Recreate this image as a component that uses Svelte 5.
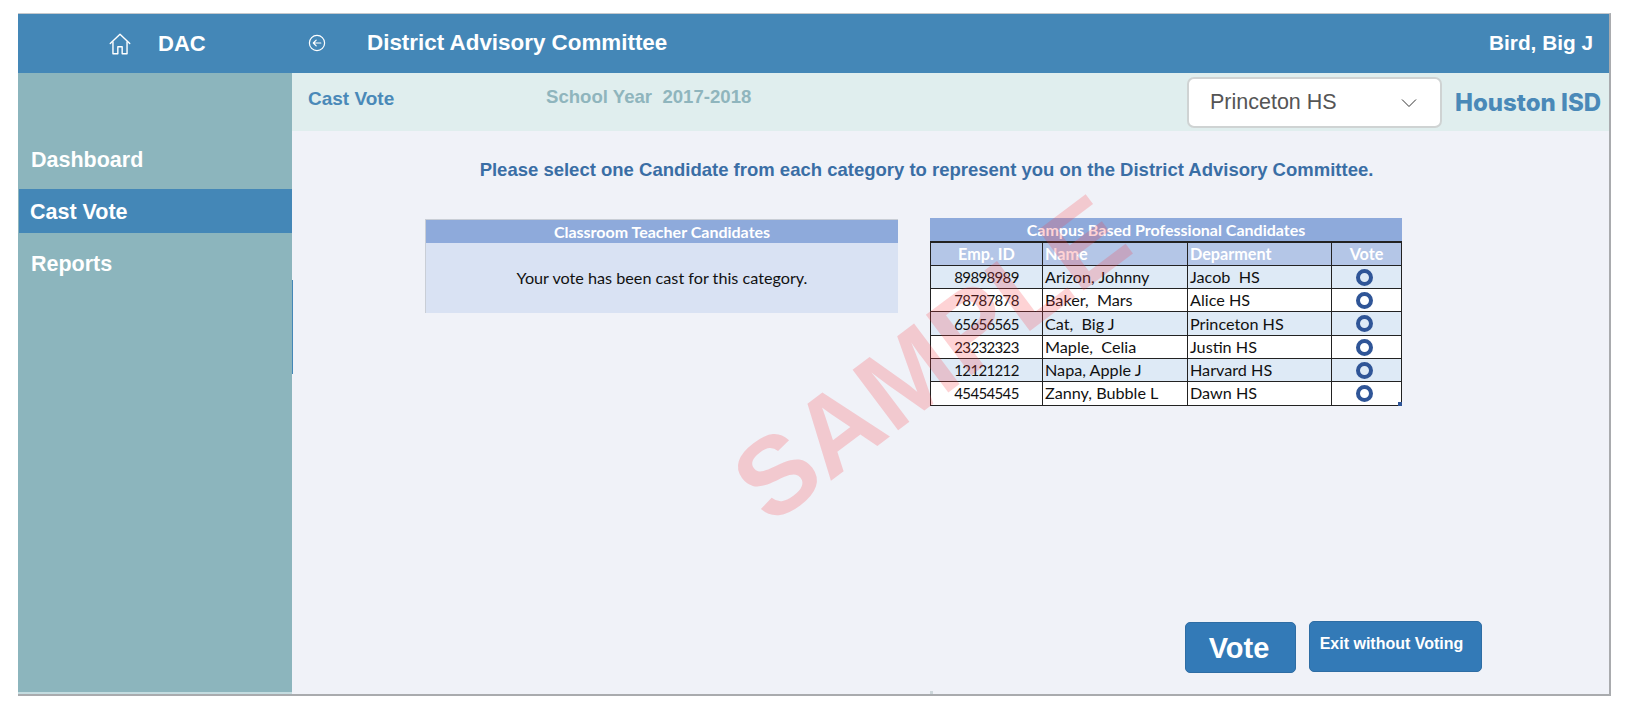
<script>
	const nav = [
		{ label: 'Dashboard', active: false },
		{ label: 'Cast Vote', active: true },
		{ label: 'Reports', active: false }
	];

	const candidates = [
		{ id: '89898989', name: 'Arizon, Johnny', dept: 'Jacob  HS' },
		{ id: '78787878', name: 'Baker,  Mars', dept: 'Alice HS' },
		{ id: '65656565', name: 'Cat,  Big J', dept: 'Princeton HS' },
		{ id: '23232323', name: 'Maple,  Celia', dept: 'Justin HS' },
		{ id: '12121212', name: 'Napa, Apple J', dept: 'Harvard HS' },
		{ id: '45454545', name: 'Zanny, Bubble L', dept: 'Dawn HS' }
	];
</script>

<div class="page">
	<div class="frame">
		<header class="topbar">
			<div class="brand">
				<svg class="home" viewBox="0 0 24 24" width="26" height="26" fill="none" stroke="#fff" stroke-width="1.3" stroke-linejoin="round" stroke-linecap="round">
					<path d="M3 11.5 12 3l9 8.5" />
					<path d="M5.5 10v11h4.5v-6.5h4V21h4.5V10" />
				</svg>
				<span>DAC</span>
			</div>
			<svg class="back" viewBox="0 0 18 18" width="18" height="18" fill="none" stroke="#fff" stroke-width="1.2" stroke-linecap="round" stroke-linejoin="round">
				<circle cx="9" cy="9" r="7.6" />
				<path d="M12.8 9H5.4M8.2 6.1 5.3 9l2.9 2.9" />
			</svg>
			<h1>District Advisory Committee</h1>
			<span class="user">Bird, Big J</span>
		</header>

		<aside class="sidebar">
			{#each nav as item}
				<div class="nav-item" class:active={item.active}>{item.label}</div>
			{/each}
		</aside>

		<div class="subbar">
			<span class="crumb">Cast Vote</span>
			<span class="year">School Year  2017-2018</span>
			<div class="select">
				<span>Princeton HS</span>
				<svg viewBox="0 0 16 10" width="16" height="10" fill="none" stroke="#333" stroke-width="1">
					<path d="M1 1.5 8 8.5l7-7" />
				</svg>
			</div>
			<span class="district">Houston ISD</span>
		</div>

		<main class="content">
			<p class="prompt">Please select one Candidate from each category to represent you on the District Advisory Committee.</p>

			<div class="tables">
				<section class="teacher">
					<div class="title">Classroom Teacher Candidates</div>
					<div class="cast">Your vote has been cast for this category.</div>
				</section>

				<section class="campus">
					<div class="title">Campus Based Professional Candidates</div>
					<table>
						<thead>
							<tr>
								<th class="center">Emp. ID</th>
								<th>Name</th>
								<th>Deparment</th>
								<th class="center">Vote</th>
							</tr>
						</thead>
						<tbody>
							{#each candidates as c}
								<tr>
									<td class="center emp">{c.id}</td>
									<td>{c.name}</td>
									<td>{c.dept}</td>
									<td class="center"><span class="radio"></span></td>
								</tr>
							{/each}
						</tbody>
					</table>
					<span class="handle"></span>
				</section>
			</div>

			<div class="actions">
				<button class="vote">Vote</button>
				<button class="exit">Exit without Voting</button>
			</div>

			<div class="watermark">SAMPLE</div>
			<span class="edge"></span>
			<span class="grip"></span>
		</main>
	</div>
</div>

<style>
	:global(body) {
		background: #fff;
		font-family: 'Liberation Sans', Arial, sans-serif;
	}

	.page {
		padding: 13px 0 0 18px;
		height: 693px;
	}

	.frame {
		width: 1593px;
		height: 683px;
		box-sizing: border-box;
		display: grid;
		grid-template-columns: 274px 1fr;
		grid-template-rows: 59px 58px 1fr;
		border-top: 1px solid #c4c8cc;
		border-right: 2px solid #a9abae;
		border-bottom: 2px solid #a9abae;
	}

	.topbar {
		grid-column: 1 / 3;
		display: flex;
		align-items: center;
		background: #4487b7;
		color: #fff;
		font-weight: 700;
	}

	.brand {
		width: 274px;
		flex: none;
		display: flex;
		align-items: center;
		box-sizing: border-box;
		padding-left: 89px;
		font-size: 22px;
	}

	.home {
		margin-right: 25px;
	}

	.back {
		margin-left: 16px;
		margin-right: 41px;
		margin-top: -2px;
	}

	h1 {
		margin: -2px 0 0;
		font-size: 22.4px;
		font-weight: 700;
	}

	.user {
		margin-left: auto;
		margin-right: 16px;
		font-size: 20.8px;
		margin-top: -2px;
	}

	.sidebar {
		grid-row: 2 / 4;
		box-sizing: border-box;
		background: #8cb5bd;
		border-bottom: 2px solid #c4dce0;
		padding-top: 64px;
		color: #fff;
		font-size: 21.5px;
		font-weight: 700;
	}

	.nav-item {
		height: 44px;
		margin-bottom: 8px;
		padding-left: 13px;
		line-height: 47px;
	}

	.nav-item.active {
		background: #4487b7;
		margin-left: 1px;
		padding-left: 11px;
		line-height: 47px;
	}

	.subbar {
		display: flex;
		align-items: center;
		background: #e0eeee;
		padding-left: 16px;
	}

	.crumb {
		width: 238px;
		flex: none;
		color: #4a89b8;
		font-size: 19px;
		font-weight: 700;
		margin-bottom: 7px;
	}

	.year {
		width: 641px;
		flex: none;
		color: #8fb5bd;
		font-size: 18.6px;
		font-weight: 700;
		white-space: pre;
		margin-bottom: 10px;
	}

	.select {
		width: 255px;
		height: 51px;
		flex: none;
		box-sizing: border-box;
		display: flex;
		align-items: center;
		justify-content: space-between;
		margin-top: 1px;
		padding: 0 23px 0 21px;
		background: #fff;
		border: 2px solid #cfd3d3;
		border-radius: 7px;
		color: #555;
		font-size: 21.5px;
	}

	.district {
		margin-left: 13px;
		color: #4a89b8;
		font-family: Inter, 'Open Sans', sans-serif;
		font-size: 24px;
		font-weight: 800;
		white-space: nowrap;
	}

	.content {
		position: relative;
		display: flex;
		flex-direction: column;
		background: #f0f2f8;
		overflow: hidden;
	}

	.prompt {
		margin: 28px 0 0;
		padding-right: 48px;
		text-align: center;
		color: #3a6ea5;
		font-size: 18.5px;
		font-weight: 700;
		line-height: 22px;
	}

	.tables {
		display: flex;
		align-items: flex-start;
		gap: 32px;
		margin: 37px 0 0 133px;
		font-family: Lato, 'Open Sans', sans-serif;
		font-size: 16.2px;
		color: #111;
	}

	.title {
		height: 23px;
		line-height: 23px;
		text-align: center;
		background: #8eaadb;
		color: #fff;
		font-weight: 700;
		font-size: 16px;
	}

	.teacher {
		width: 473px;
		flex: none;
		margin-top: 1px;
		border-top: 1px solid #c9ced6;
		border-left: 1px solid #c9ced6;
		box-sizing: border-box;
		background: #d9e2f3;
	}

	.cast {
		height: 70px;
		padding-bottom: 2px;
		box-sizing: border-box;
		display: flex;
		align-items: center;
		justify-content: center;
	}

	.campus {
		position: relative;
		width: 472px;
		flex: none;
	}

	table {
		width: 100%;
		table-layout: fixed;
		border-collapse: collapse;
		border-top: 2px solid #222;
	}

	th,
	td {
		box-sizing: border-box;
		height: 23.3px;
		padding: 0 0 0 2px;
		border: 1.5px solid #222;
		text-align: left;
		white-space: pre;
		line-height: 20px;
	}

	th {
		background: #b4c6e7;
		color: #fff;
		font-weight: 700;
	}

	th:nth-child(1) { width: 112px; }
	th:nth-child(2) { width: 145px; }
	th:nth-child(3) { width: 144px; }

	tbody tr:nth-child(odd) {
		background: #deeaf6;
	}

	tbody tr:nth-child(even) {
		background: #fff;
	}

	.center {
		text-align: center;
		padding: 0;
	}

	.emp {
		font-size: 15px;
		letter-spacing: -0.65px;
	}

	.radio {
		display: inline-block;
		width: 17px;
		height: 17px;
		box-sizing: border-box;
		border: 4px solid #2f5597;
		border-radius: 50%;
		vertical-align: middle;
		margin: 0 4px 2px 0;
	}

	.handle {
		position: absolute;
		right: 0;
		bottom: 0;
		width: 4px;
		height: 4px;
		background: #2f5597;
	}

	.actions {
		display: flex;
		align-items: flex-start;
		gap: 13px;
		margin-top: auto;
		margin-bottom: 21px;
		padding-left: 893px;
	}

	button {
		box-sizing: border-box;
		height: 51px;
		padding: 0;
		background: #337ab7;
		border: 1px solid #2e6da4;
		border-radius: 5px;
		color: #fff;
		font-family: 'Liberation Sans', Arial, sans-serif;
		font-weight: 700;
	}

	.vote {
		width: 111px;
		margin-top: 1px;
		font-size: 29px;
		padding: 2px 3px 0 0;
	}

	.exit {
		width: 173px;
		padding: 0 8px 5px 0;
		font-size: 16px;
	}

	.watermark {
		position: absolute;
		left: 411px;
		top: 178px;
		width: 440px;
		text-align: center;
		transform: rotate(-37deg);
		color: rgba(250, 60, 65, 0.225);
		font-size: 110px;
		font-weight: 700;
		line-height: 110px;
		pointer-events: none;
	}

	.edge {
		position: absolute;
		left: 0;
		top: 149px;
		width: 1px;
		height: 94px;
		background: #4487b7;
	}

	.grip {
		position: absolute;
		left: 638px;
		bottom: 0;
		width: 3px;
		height: 3px;
		background: #cdd7db;
	}
</style>
